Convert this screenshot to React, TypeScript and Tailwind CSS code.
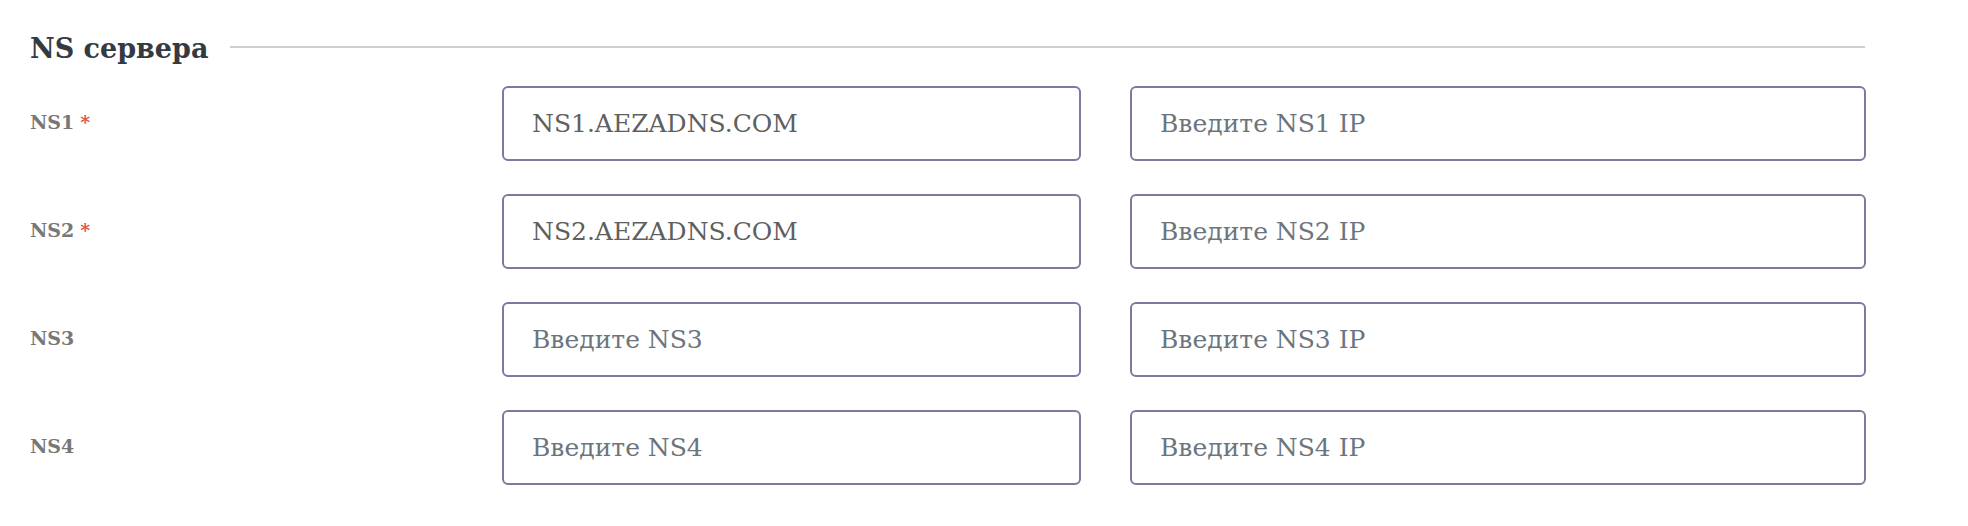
import React from "react";

const rows = [
  { label: "NS1", required: true, value: "NS1.AEZADNS.COM", ph: "Введите NS1", ipPh: "Введите NS1 IP" },
  { label: "NS2", required: true, value: "NS2.AEZADNS.COM", ph: "Введите NS2", ipPh: "Введите NS2 IP" },
  { label: "NS3", required: false, value: "", ph: "Введите NS3", ipPh: "Введите NS3 IP" },
  { label: "NS4", required: false, value: "", ph: "Введите NS4", ipPh: "Введите NS4 IP" },
];

const font = { fontFamily: '"DejaVu Serif", serif' };

export default function App() {
  return (
    <div className="w-[1968px] h-[526px] bg-white overflow-hidden" style={font}>
      <div className="ml-[30px] w-[1835px] pt-[28px]">
        <div className="flex items-center gap-[22px] h-[40px]">
          <h2 className="text-[27px] font-bold text-[#343a40] leading-none whitespace-nowrap">NS сервера</h2>
          <div className="flex-1 h-[2px] bg-[#cfcfcf] -mt-[3px]" />
        </div>
        <div className="mt-[18px] flex flex-col gap-[33px]">
          {rows.map((r) => (
            <div key={r.label} className="grid" style={{ gridTemplateColumns: "472px 579px 735px", columnGap: 0 }}>
              <label className="pt-[22px] text-[19px] font-semibold text-[#777777] leading-[28px]">
                {r.label}
                {r.required && <span className="ml-[6px] text-[#e0534a]">*</span>}
              </label>
              <input
                readOnly
                defaultValue={r.value}
                placeholder={r.ph}
                className="h-[75px] w-[579px] rounded-[6px] border-2 border-[#7b7ba0] px-[28px] text-[25px] text-[#5f5f5f] placeholder:text-[#6c757d] outline-none"
                style={font}
              />
              <div className="pl-[49px]">
                <input
                  readOnly
                  placeholder={r.ipPh}
                  className="h-[75px] w-[736px] rounded-[6px] border-2 border-[#7b7ba0] px-[28px] text-[25px] text-[#5f5f5f] placeholder:text-[#6c757d] outline-none"
                  style={font}
                />
              </div>
            </div>
          ))}
        </div>
      </div>
    </div>
  );
}
